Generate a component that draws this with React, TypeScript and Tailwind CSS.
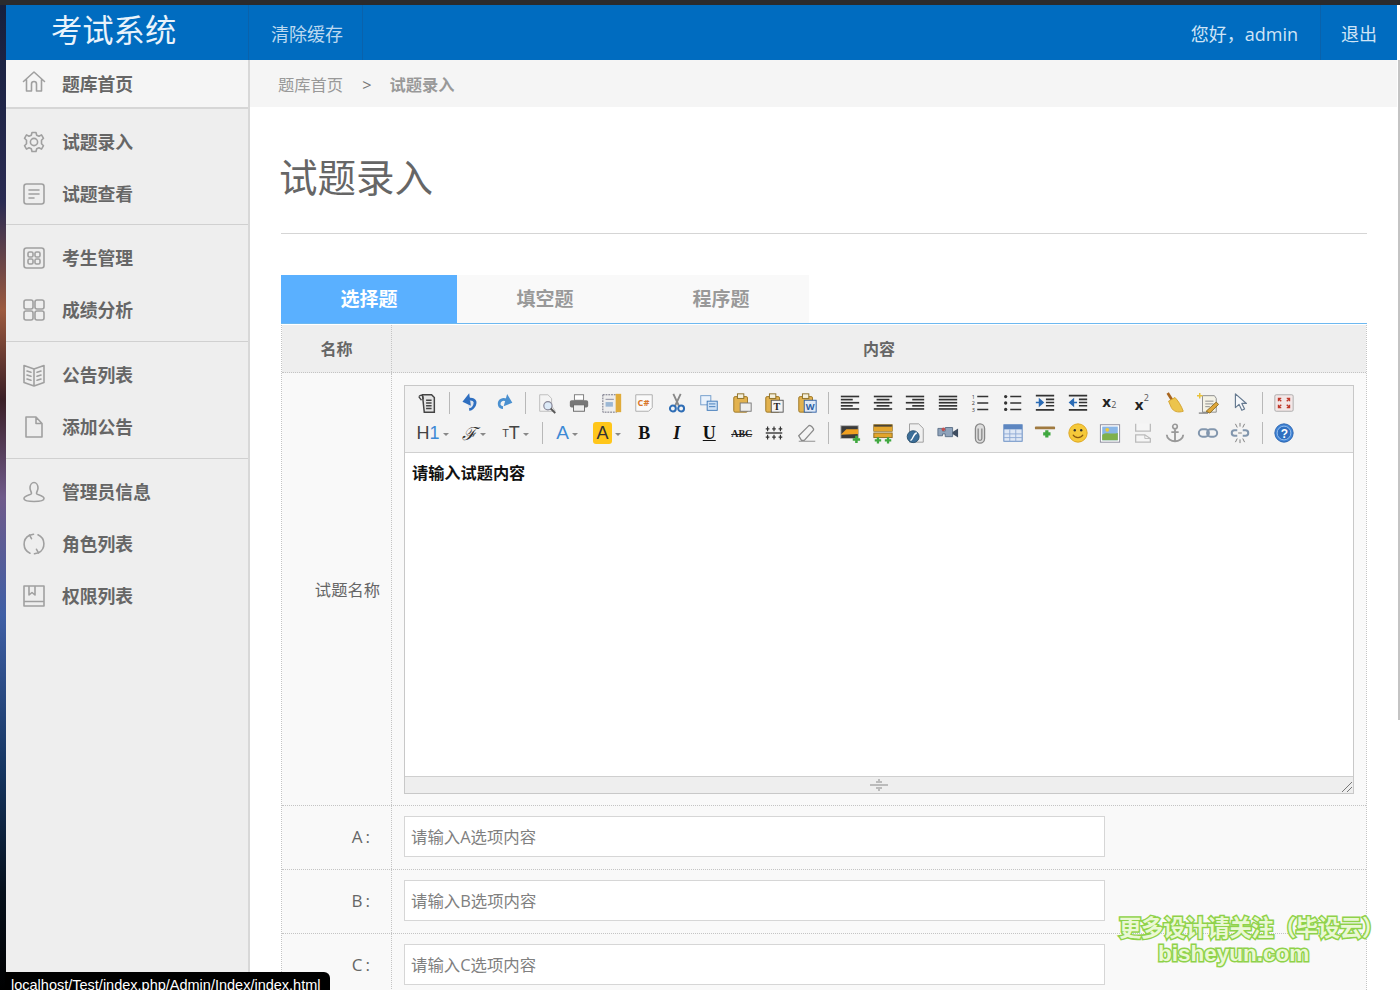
import type { ReactNode } from 'react';

const Nav = ({ children }: { children: ReactNode }) => (
  <svg width="24" height="24" viewBox="0 0 24 24" fill="none" stroke="#a0a0a0" strokeWidth="1.6" strokeLinecap="round" strokeLinejoin="round">
    {children}
  </svg>
);

const Ico = ({ children }: { children: ReactNode }) => (
  <svg width="22" height="22" viewBox="0 0 24 24" fill="none">
    {children}
  </svg>
);

const Caret = () => <span className="ml-[3px] mt-[2px] inline-block border-x-[3px] border-t-[3px] border-x-transparent border-t-[#888]" />;

const navGroups = [
  [
    {
      label: '试题录入',
      icon: (
        <Nav>
          <circle cx="12" cy="12" r="3.6" />
          <path d="M10 2.5h4l.7 2.8 2.3 1 2.5-1.4 2 3.4-2 2v3.4l2 2-2 3.4-2.5-1.4-2.3 1-.7 2.8h-4l-.7-2.8-2.3-1-2.5 1.4-2-3.4 2-2v-3.4l-2-2 2-3.4 2.5 1.4 2.3-1z" />
        </Nav>
      ),
    },
    {
      label: '试题查看',
      icon: (
        <Nav>
          <rect x="2" y="2" width="20" height="20" rx="2.5" />
          <path d="M7 8h10M7 12h10M7 16h5" />
        </Nav>
      ),
    },
  ],
  [
    {
      label: '考生管理',
      icon: (
        <Nav>
          <rect x="2" y="2" width="20" height="20" rx="2.5" />
          <rect x="6" y="6" width="5" height="5" rx="1.5" />
          <rect x="13" y="6" width="5" height="5" rx="1.5" />
          <rect x="6" y="13" width="5" height="5" rx="1.5" />
          <rect x="13" y="13" width="5" height="5" rx="1.5" />
        </Nav>
      ),
    },
    {
      label: '成绩分析',
      icon: (
        <Nav>
          <rect x="2" y="2" width="9" height="9" rx="2" />
          <rect x="13" y="2" width="9" height="9" rx="2" />
          <rect x="2" y="13" width="9" height="9" rx="2" />
          <rect x="13" y="13" width="9" height="9" rx="2" />
        </Nav>
      ),
    },
  ],
  [
    {
      label: '公告列表',
      icon: (
        <Nav>
          <path d="M12 6 2 2.500v17L12 23l10-3.500v-17zM12 6v17" />
          <path d="M5 8l4 1.300M5 12l4 1.300M5 16l4 1.300M19 8l-4 1.300M19 12l-4 1.300M19 16l-4 1.300" />
        </Nav>
      ),
    },
    {
      label: '添加公告',
      icon: (
        <Nav>
          <path d="M4 2h10l6 6.500V22H4zM14 2v6.500h6" />
        </Nav>
      ),
    },
  ],
  [
    {
      label: '管理员信息',
      icon: (
        <Nav>
          <path d="M8 8a4 5.500 0 1 1 8 0c0 2.500-1.500 3.500-1.500 5.500 0 1.500 7.500 2 7.500 5 0 2-4.500 3-10 3s-10-1-10-3c0-3 7.500-3.500 7.500-5C9.500 11.500 8 10.500 8 8z" />
        </Nav>
      ),
    },
    {
      label: '角色列表',
      icon: (
        <Nav>
          <path d="M7.500 3.200A10 10 0 0 0 8 21.200M16.500 20.800A10 10 0 0 0 16 2.800" />
          <path d="m7.500 3.200 4-1M7.500 3.200l2 3.500M16.500 20.800l-4 1M16.500 20.800l-2-3.500" />
        </Nav>
      ),
    },
    {
      label: '权限列表',
      icon: (
        <Nav>
          <path d="M2 2h20v20H2zM2 17.500h20M7 2v9l3-2.500 3 2.500V2" />
        </Nav>
      ),
    },
  ],
];

const Sep = () => <div className="mx-[5px] h-[22px] w-px self-center bg-[#b8b8b8]" />;

const Btn = ({ children, w = 'w-[32.5px]' }: { children: ReactNode; w?: string }) => (
  <div className={`flex h-[30px] shrink-0 items-center justify-center ${w}`}>{children}</div>
);

const lines = (rows: [number, number][]) => rows.map(([x, w], i) => <rect key={i} x={x} y={4 + i * 3.4} width={w} height="1.800" fill="#333" />);

const row1: ReactNode[] = [
  <Ico><path d="M7 3h10l3 3v16H9z" fill="#e4e4e4" stroke="#444" strokeWidth="1.600" /><path d="M3 5c3-3 5-1 5 3M3 5l3 4M11 9h6M11 12h6M11 15h6M11 18h6" stroke="#444" strokeWidth="1.400" /></Ico>,
  'sep',
  <Ico><path d="M9 5 5 10l5 2.500zM7 9c6-3 11 0 9 5-1 3-4 5-6 5" stroke="#2f6fc0" strokeWidth="3" fill="#2f6fc0" fillOpacity="0.1" /></Ico>,
  <Ico><path d="M17 6l3 5-5 2zM18 10c-6-4-11-1-10 4 .5 2 2 3 4 3" stroke="#4a90d0" strokeWidth="3" fill="none" /></Ico>,
  'sep',
  <Ico><path d="M4 3h9l4 4v8l4 6H4z" fill="#f4f4f4" stroke="#bbb" /><circle cx="13" cy="15" r="4.500" fill="#dceaf8" stroke="#889" strokeWidth="1.300" /><path d="m16 18 5 5" stroke="#555" strokeWidth="2" /></Ico>,
  <Ico><rect x="7" y="3" width="10" height="6" fill="#fff" stroke="#777" /><rect x="2" y="9" width="20" height="8" rx="2" fill="#777" /><rect x="6" y="14" width="12" height="7" fill="#eee" stroke="#666" /></Ico>,
  <Ico><rect x="2" y="3" width="15" height="19" fill="#eee" stroke="#667" strokeDasharray="2 1" /><rect x="16" y="2" width="6" height="20" fill="#e0ab3a" /><rect x="5" y="11" width="8" height="5" fill="#9bb7d4" /><path d="M5 8h9" stroke="#889" /></Ico>,
  <Ico><path d="M3 3h18v14l-4 4H3z" fill="#fafafa" stroke="#aaa" /><text x="5" y="15" fontSize="10" fontWeight="700" fill="#d9772b">C#</text></Ico>,
  <Ico><path d="m8 2 6 13M16 2l-6 13" stroke="#888" strokeWidth="2" /><circle cx="7.500" cy="18" r="3.200" stroke="#2e6db5" strokeWidth="2.200" /><circle cx="16.500" cy="18" r="3.200" stroke="#2e6db5" strokeWidth="2.200" /></Ico>,
  <Ico><rect x="3" y="4" width="11" height="10" fill="#eaf2fb" stroke="#6f9bcb" /><rect x="10" y="10" width="11" height="10" fill="#cfe2f6" stroke="#3f78b8" /><path d="M12 13h7M12 16h7" stroke="#3f78b8" /></Ico>,
  <Ico><rect x="3" y="5" width="15" height="17" rx="1.500" fill="#e2b24f" stroke="#9a7421" /><rect x="7" y="2" width="7" height="5" fill="#f4f0dd" stroke="#8a6b20" /><rect x="10" y="12" width="12" height="9" fill="#eee" stroke="#777" /></Ico>,
  <Ico><rect x="3" y="5" width="15" height="17" rx="1.500" fill="#e2b24f" stroke="#9a7421" /><rect x="7" y="2" width="7" height="5" fill="#f4f0dd" stroke="#8a6b20" /><rect x="9" y="9" width="13" height="13" fill="#f3f3f3" stroke="#555" /><text x="11.500" y="20" fontSize="11" fontWeight="700" fontFamily="Liberation Serif" fill="#222">T</text></Ico>,
  <Ico><rect x="3" y="5" width="15" height="17" rx="1.500" fill="#e2b24f" stroke="#9a7421" /><rect x="7" y="2" width="7" height="5" fill="#f4f0dd" stroke="#8a6b20" /><rect x="9" y="9" width="13" height="13" fill="#dfe9f6" stroke="#2d5fa5" /><text x="10.500" y="20" fontSize="10" fontWeight="700" fill="#2d5fa5">W</text></Ico>,
  'sep',
  <Ico>{lines([[2, 20], [2, 13], [2, 20], [2, 13], [2, 20]])}</Ico>,
  <Ico>{lines([[2, 20], [5, 14], [2, 20], [5, 14], [2, 20]])}</Ico>,
  <Ico>{lines([[2, 20], [9, 13], [2, 20], [9, 13], [2, 20]])}</Ico>,
  <Ico>{lines([[2, 20], [2, 20], [2, 20], [2, 20], [2, 20]])}</Ico>,
  <Ico><path d="M9 5h12M9 12h12M9 19h12" stroke="#333" strokeWidth="1.600" /><text x="3" y="8" fontSize="6" fill="#333">1</text><text x="3" y="14.500" fontSize="6" fill="#333">2</text><text x="3" y="21.500" fontSize="6" fill="#333">3</text></Ico>,
  <Ico><path d="M9 5h12M9 12h12M9 19h12" stroke="#333" strokeWidth="1.600" /><circle cx="4" cy="5" r="1.800" fill="#333" /><circle cx="4" cy="12" r="1.800" fill="#333" /><circle cx="4" cy="19" r="1.800" fill="#333" /></Ico>,
  <Ico><path d="M2 4h20M13 8h9M13 11.500h9M13 15h9M2 19.500h20" stroke="#333" strokeWidth="1.800" /><path d="M2 11.500h6M6 8l4 3.500L6 15z" stroke="#2a6bb5" strokeWidth="1.600" fill="#2a6bb5" /></Ico>,
  <Ico><path d="M2 4h20M13 8h9M13 11.500h9M13 15h9M2 19.500h20" stroke="#333" strokeWidth="1.800" /><path d="M4 11.500h7M7 8l-4 3.500L7 15z" stroke="#2a6bb5" strokeWidth="1.600" fill="#2a6bb5" /></Ico>,
  <div className="relative h-[24px] w-[24px] font-['Open_Sans',sans-serif]"><span className="absolute left-[4px] top-[-1px] text-[15px] font-bold text-[#222]">x</span><span className="absolute left-[13px] top-[7px] text-[9px] text-[#555]">2</span></div>,
  <div className="relative h-[24px] w-[24px] font-['Open_Sans',sans-serif]"><span className="absolute left-[4px] top-[2px] text-[15px] font-bold text-[#222]">x</span><span className="absolute left-[13px] top-[0px] text-[9px] text-[#555]">2</span></div>,
  <Ico><path d="m4 1 5 8" stroke="#a8651e" strokeWidth="3" /><path d="M5 10 12 6c3 3 7 9 9 15-6 2-11 0-13-4z" fill="#ecc44c" stroke="#d3a22e" /></Ico>,
  <Ico><path d="M6 4h13l2 3v15H6z" fill="#f4f2e6" stroke="#888" /><path d="M9 10h9M9 13h9M9 16h5" stroke="#888" /><path d="m10 21 11-10 2.500 2.500L14 23z" fill="#e0a73a" stroke="#8a6a20" /><path d="M3 1v6M0 4h6" stroke="#e8c23a" strokeWidth="1.600" /><path d="M2 23h10" stroke="#555" /></Ico>,
  <Ico><path d="M7 2v15l4-3.500 3 6.500 3-1.500-3-6h5z" fill="#f6f8fb" stroke="#667a90" strokeWidth="1.300" strokeLinejoin="round" /></Ico>,
  'sep',
  <Ico><rect x="2" y="3" width="20" height="18" rx="1.500" fill="#f2e6e6" stroke="#aaa" /><path d="m6 7 3 3M6 10V7h3M18 7l-3 3M18 10V7h-3M6 17l3-3M6 14v3h3M18 17l-3-3M18 14v3h-3" stroke="#c0392b" strokeWidth="1.500" /></Ico>,
];

const row2Right: ReactNode[] = [
  <Ico><rect x="2" y="4" width="19" height="14" fill="#3a3a3a" stroke="#bbb" /><path d="M2 14 8 8h13v5z" fill="#f0a020" /><path d="M15 19h8M19 15v8" stroke="#3fa83f" strokeWidth="2.800" /></Ico>,
  <Ico><rect x="2" y="3" width="20" height="7" fill="#3a3a3a" stroke="#8a6a20" /><rect x="2" y="5" width="20" height="5" fill="#e3a52c" /><rect x="2" y="12" width="20" height="5" fill="#e3a52c" stroke="#8a6a20" /><path d="M3 20h7M6.500 16.500v7M14 20h7M17.500 16.500v7" stroke="#3fa83f" strokeWidth="2.500" /></Ico>,
  <Ico><path d="M6 2h10l5 5v15H6z" fill="#f0f0f0" stroke="#999" /><circle cx="10" cy="16" r="6.500" fill="#3c6e98" stroke="#29506f" /><path d="M7 20c3 0 3-8 7-8" stroke="#fff" strokeWidth="1.500" /></Ico>,
  <Ico><path d="M1 7h5v3h3V6h8v10H9v-3H6v2H1z" fill="#8fa3bb" stroke="#5b7088" /><path d="M17 11l6-4v10l-6-4z" fill="#3e4d60" /><circle cx="7" cy="8" r="2" fill="#c05050" /></Ico>,
  <Ico><path d="M7 7a5 5 0 0 1 10 0v11a5 5 0 0 1-10 0z" fill="#ddd" stroke="#888" strokeWidth="1.400" /><path d="M10 7v11a2 2 0 0 0 4 0V7" stroke="#888" strokeWidth="1.400" /></Ico>,
  <Ico><rect x="2" y="3" width="20" height="18" fill="#dfe8f5" stroke="#5d86c0" /><rect x="2" y="3" width="20" height="5" fill="#5d86c0" /><path d="M2 13h20M2 17h20M8.500 8v13M15 8v13" stroke="#8eaad4" /></Ico>,
  <Ico><rect x="1" y="5" width="22" height="3" rx="1" fill="#a07a40" /><path d="M10 13h8M14 9v8" stroke="#3fa83f" strokeWidth="3.500" /></Ico>,
  <Ico><circle cx="12" cy="12" r="10" fill="#f5c93a" stroke="#dca420" /><circle cx="8.500" cy="9" r="1.300" fill="#333" /><circle cx="15.500" cy="9" r="1.300" fill="#333" /><path d="M6.500 14c2 4 9 4 11 0" stroke="#8a5a10" strokeWidth="1.400" /></Ico>,
  <Ico><rect x="1.500" y="3" width="21" height="19" fill="#fff" stroke="#889" /><rect x="3.500" y="5" width="17" height="15" fill="#8ab6e6" /><path d="M3.500 20v-6c5-4 10 0 17-2v8z" fill="#7fb04b" /><circle cx="9" cy="8.500" r="2" fill="#f0c83a" /></Ico>,
  <Ico><path d="M4 2v8h16V2M4 22v-8h10l6 4v4z" fill="#f5f5f5" stroke="#bbb" strokeWidth="1.400" /><path d="M14 14v4h6" stroke="#bbb" /></Ico>,
  <Ico><circle cx="12" cy="5" r="2.500" stroke="#999" strokeWidth="1.800" /><path d="M12 8v13M8 11h8M3 14c0 4 5 7 9 7s9-3 9-7" stroke="#999" strokeWidth="2" /></Ico>,
  <Ico><rect x="2" y="8" width="11" height="8" rx="4" stroke="#8296ad" strokeWidth="2.200" /><rect x="11" y="8" width="11" height="8" rx="4" stroke="#8296ad" strokeWidth="2.200" /></Ico>,
  <Ico><path d="M9 9H6a3 3 0 0 0 0 6h3M15 9h3a3 3 0 0 1 0 6h-3" stroke="#8296ad" strokeWidth="2.200" /><path d="M10 12h4M7 2l2 4M12 1v4M17 2l-2 4M7 22l2-4M12 23v-4M17 22l-2-4" stroke="#777" /></Ico>,
  'sep',
  <Ico><circle cx="12" cy="12" r="10" fill="#3f83d6" stroke="#2a62ad" /><circle cx="12" cy="12" r="7.500" fill="#2f6fc0" stroke="#9cc3ee" /><text x="8.500" y="17" fontSize="13" fontWeight="700" fill="#fff">?</text></Ico>,
];

const Row = ({ label, ph }: { label: string; ph: string }) => (
  <div className="flex h-[64px] shrink-0 border-b border-dotted border-[#c4c4c4] bg-[#f9f9f9]">
    <div className="flex w-[110px] shrink-0 items-center justify-end gap-[3px] border-r border-dotted border-[#c4c4c4] pb-[1px] pr-[21px] text-[17px] text-[#666]">
      <span>{label}</span>
      <span>:</span>
    </div>
    <div className="flex flex-1 items-center pb-[2px] pl-[12px]">
      <input
        className="h-[41px] w-[701px] border border-[#d6d6d6] bg-white px-[6px] text-[16.400px] outline-none placeholder:text-[#808080]"
        placeholder={ph}
      />
    </div>
  </div>
);

export default function App() {
  return (
    <div className="relative flex h-[990px] w-[1400px] flex-col overflow-hidden bg-white font-['Open_Sans','Noto_Sans_CJK_SC',sans-serif]">
      <div className="h-[5px] shrink-0 bg-[#2b2b2d]" />
      <div className="flex min-h-0 flex-1">
        <div className="w-[6px] shrink-0 bg-[linear-gradient(180deg,#16203d_0%,#2a2b52_20%,#9c5a3f_31%,#3a1f26_40%,#6f5a8a_50%,#3f5fa5_62%,#14345f_78%,#06101c_90%,#000_100%)]" />

        <div className="flex w-[1391px] shrink-0 flex-col">
          {/* Header */}
          <header className="flex h-[55px] shrink-0 bg-[#006cc0] text-[18px] text-[#cfe4f6]">
            <div className="flex w-[243px] items-center border-r border-[#0a62ab] pb-[5px] pl-[45px] text-[31.300px] text-[#e9f3fb]">考试系统</div>
            <div className="flex w-[114px] items-center border-r border-[#0a62ab] pl-[22px] pt-[3px] text-[#bcd9f0]">清除缓存</div>
            <div className="ml-auto flex items-center pr-[22px] pt-[3px]">您好，admin</div>
            <div className="flex w-[77px] items-center justify-center border-l border-[#0a62ab] pt-[3px]">退出</div>
          </header>

          <div className="flex min-h-0 flex-1">
            {/* Sidebar */}
            <aside className="w-[244px] shrink-0 border-r-2 border-[#d8d8d8] bg-[#eeeeee]">
              <div className="flex h-[49px] items-center gap-[16px] border-b-2 border-[#d6d6d6] bg-[#f5f5f5] pl-[16px] pt-[2px] text-[17.800px] font-bold text-[#666]">
                <div className="mb-[6px]">
                  <Nav>
                    <path d="M1.500 11.500 12 2l10.500 9.500M4.500 9.500V21h5v-7a2.500 2.500 0 0 1 5 0v7h5V9.500" />
                  </Nav>
                </div>
                题库首页
              </div>
              {navGroups.map((group, i) => (
                <div key={i} className={`pt-[7px] ${i === 0 ? 'pb-[4px]' : 'pb-[5px]'} ${i < 3 ? 'border-b border-[#d0d0d0]' : ''}`}>
                  {group.map((item) => (
                    <div key={item.label} className="flex h-[52px] items-center gap-[16px] pl-[16px] text-[17.800px] font-bold text-[#666]">
                      {item.icon}
                      {item.label}
                    </div>
                  ))}
                </div>
              ))}
            </aside>

            {/* Main */}
            <main className="flex min-w-0 flex-1 flex-col">
              <div className="flex h-[47px] shrink-0 items-center bg-[#f5f5f5] pl-[28px] pt-[3px] text-[16.300px] text-[#999]">
                <span>题库首页</span>
                <span className="ml-[19px] mr-[18px] text-[#777]">&gt;</span>
                <span className="font-bold">试题录入</span>
              </div>

              <div className="flex flex-col pl-[31px] pr-[30px]">
                <h1 className="-ml-[2px] mt-[42px] text-[38.500px] leading-[56px] text-[#666]">试题录入</h1>
                <div className="mt-[28px] h-px bg-[#d5d5d5]" />

                <div className="mt-[41px] flex h-[48px] text-[19px] font-bold text-[#999]">
                  <div className="flex w-[176px] items-center justify-center bg-[#5ab0ff] pt-[1px] text-white">选择题</div>
                  <div className="flex w-[176px] items-center justify-center bg-[#f9f9f9] pt-[1px]">填空题</div>
                  <div className="flex w-[176px] items-center justify-center bg-[#f9f9f9] pt-[1px]">程序题</div>
                </div>
                <div className="h-px bg-[#6db8f0]" />

                <div className="mt-px flex flex-col border-x border-dotted border-[#c4c4c4]">
                  <div className="flex h-[48px] shrink-0 border-b border-dotted border-[#c4c4c4] bg-[#eeeeee] text-[16px] font-bold text-[#666]">
                    <div className="flex w-[110px] shrink-0 items-center justify-center border-r border-dotted border-[#c4c4c4]">名称</div>
                    <div className="flex flex-1 items-center justify-center">内容</div>
                  </div>

                  <div className="flex h-[433px] shrink-0 border-b border-dotted border-[#c4c4c4] bg-[#f9f9f9]">
                    <div className="flex w-[110px] shrink-0 items-center justify-end border-r border-dotted border-[#c4c4c4] pr-[11px] pt-[2px] text-[16.300px] text-[#666]">试题名称</div>
                    <div className="flex-1 pl-[12px] pt-[12px]">
                      {/* Editor */}
                      <div className="flex h-[409px] w-[950px] flex-col border border-[#c8c8c8] bg-white">
                        <div className="h-[67px] shrink-0 border-b border-[#d0d0d0] bg-[#f3f3f3] pl-[6px] pt-[2px]">
                          <div className="flex h-[30px]">
                            {row1.map((node, i) => (node === 'sep' ? <Sep key={i} /> : <Btn key={i}>{node}</Btn>))}
                          </div>
                          <div className="flex h-[30px] font-['Liberation_Sans',sans-serif]">
                            <Btn w="w-[43px]">
                              <span className="text-[18px] text-[#444]">H<span className="text-[#3d8ad6]">1</span></span>
                              <Caret />
                            </Btn>
                            <Btn w="w-[40px]">
                              <span className="font-['DejaVu_Serif',serif] text-[18px] italic text-[#333]">ℱ</span>
                              <Caret />
                            </Btn>
                            <Btn w="w-[43px]">
                              <span className="text-[11px] text-[#444]">T</span>
                              <span className="text-[18px] text-[#444]">T</span>
                              <Caret />
                            </Btn>
                            <Sep />
                            <Btn w="w-[38px]">
                              <span className="text-[19px] text-[#3d8ad6]">A</span>
                              <Caret />
                            </Btn>
                            <Btn w="w-[42px]">
                              <span className="rounded-[3px] bg-[#ffc61a] px-[3px] text-[18px] leading-[22px] text-[#333]">A</span>
                              <Caret />
                            </Btn>
                            <Btn>
                              <span className="font-['Liberation_Serif',serif] text-[18px] font-bold text-[#111]">B</span>
                            </Btn>
                            <Btn>
                              <span className="font-['Liberation_Serif',serif] text-[18px] font-bold italic text-[#111]">I</span>
                            </Btn>
                            <Btn>
                              <span className="font-['Liberation_Serif',serif] text-[18px] font-bold text-[#111] underline">U</span>
                            </Btn>
                            <Btn>
                              <span className="font-['Liberation_Serif',serif] text-[10px] font-bold text-[#222] line-through">ABC</span>
                            </Btn>
                            <Btn>
                              <Ico><path d="M3 12h18" stroke="#333" strokeWidth="1.500" /><path d="M5 5v5M12 5v5M19 5v5M5 14v5M12 14v5M19 14v5M3 7.500h4M10 7.500h4M17 7.500h4M3 16.500h4M10 16.500h4M17 16.500h4" stroke="#333" strokeWidth="1.300" /></Ico>
                            </Btn>
                            <Btn>
                              <Ico><path d="M3 15 14 4c2-1 6 3 5 5L9 20H6z" fill="#f4f4f4" stroke="#8a8a8a" strokeWidth="1.400" /><path d="M3 21h18" stroke="#8a8a8a" /></Ico>
                            </Btn>
                            <Sep />
                            {row2Right.map((node, i) => (node === 'sep' ? <Sep key={i} /> : <Btn key={i}>{node}</Btn>))}
                          </div>
                        </div>
                        <div className="flex-1 px-[7px] pt-[8px] text-[16.200px] font-bold leading-[24px] text-[#111]">请输入试题内容</div>
                        <div className="relative flex h-[17px] shrink-0 items-center justify-center border-t border-[#cfcfcf] bg-[#eeeeee]">
                          <svg width="20" height="12" viewBox="0 0 20 12" fill="none" stroke="#888">
                            <path d="M1 6h18M7 3h6M7 9h6M10 0v2M10 10v2" />
                          </svg>
                          <svg className="absolute bottom-0 right-0" width="12" height="12" viewBox="0 0 12 12" fill="none" stroke="#777">
                            <path d="M1 11 11 1M6 11l5-5" />
                          </svg>
                        </div>
                      </div>
                    </div>
                  </div>

                  <Row label="A" ph="请输入A选项内容" />
                  <Row label="B" ph="请输入B选项内容" />
                  <Row label="C" ph="请输入C选项内容" />
                </div>
              </div>
            </main>
          </div>
        </div>

        {/* Window edge with scrollbar */}
        <div className="w-[3px] shrink-0 bg-white pt-[55px]">
          <div className="ml-[1px] h-[660px] w-[2px] bg-[#c4c4c4]" />
        </div>
      </div>

      {/* Status tooltip */}
      <div className="absolute bottom-0 left-[5px] h-[18px] w-[325px] overflow-hidden rounded-tr-[6px] bg-black pl-[6px] pt-[3px] font-['Liberation_Sans',sans-serif] text-[14.500px] leading-[20px] text-white">
        localhost/Test/index.php/Admin/Index/index.html
      </div>

      {/* Watermark */}
      <div className="pointer-events-none absolute left-[1119px] top-[915px] flex w-[256px] flex-col items-start font-bold text-[#eaf8d5] [-webkit-text-stroke:3px_#8fd24a] [paint-order:stroke_fill]">
        <div className="whitespace-nowrap text-[22.300px] leading-[26px] tracking-[-0.2px]">更多设计请关注（毕设云）</div>
        <div className="ml-[39px] whitespace-nowrap font-['Liberation_Sans',sans-serif] text-[22.500px] leading-[26px]">bisheyun.com</div>
      </div>
    </div>
  );
}
